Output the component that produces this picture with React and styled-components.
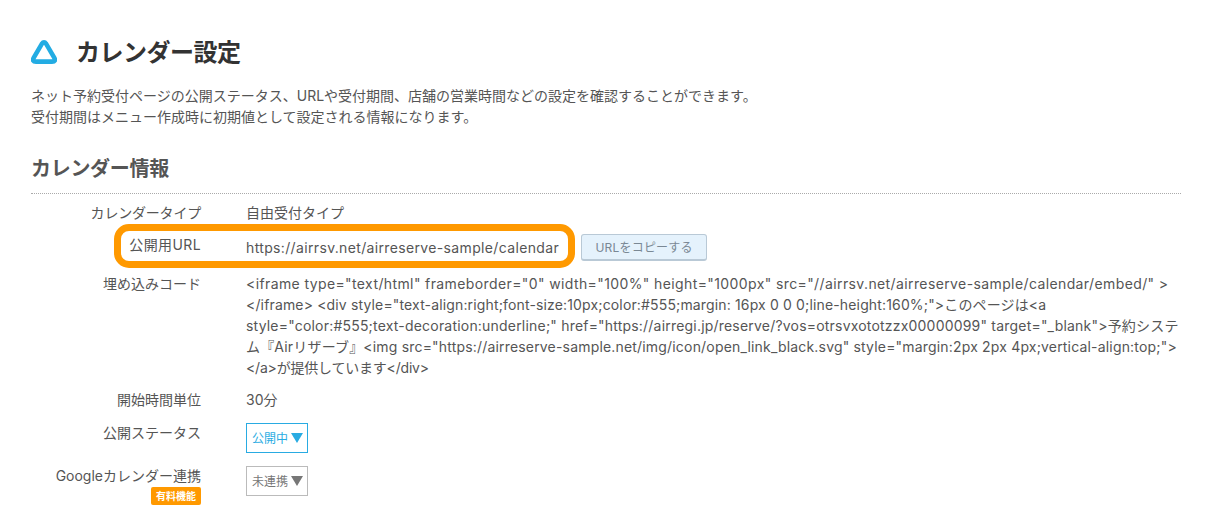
import React from "react";
import styled, { createGlobalStyle } from "styled-components";

const GlobalStyle = createGlobalStyle`
  body {
    margin: 0;
    background: #fff;
    color: #555;
    font-family: Inter, "Noto Sans CJK JP", sans-serif;
    font-size: 14px;
  }
`;

const Page = styled.main`
  box-sizing: border-box;
  width: 1208px;
  height: 520px;
  overflow: hidden;
  padding: 36px 27px 0 31px;
`;

const TitleRow = styled.header`
  display: flex;
  align-items: center;
  gap: 19px;
  height: 32px;
`;

const Title = styled.h1`
  margin: 0 0 4px;
  font-size: 24px;
  font-weight: 700;
  letter-spacing: -0.5px;
  color: #333;
`;

const Intro = styled.p`
  margin: 17px 0 0;
  line-height: 21px;
  color: #555;
`;

const SectionTitle = styled.h2`
  margin: 28px 0 0;
  padding-bottom: 9px;
  font-size: 20px;
  line-height: 29px;
  font-weight: 700;
  letter-spacing: -0.3px;
  color: #555;
  border-bottom: 1px dotted #aaa;
`;

const Rows = styled.dl`
  margin: 8px 0 0;
`;

const Row = styled.div`
  position: relative;
  display: grid;
  grid-template-columns: 170px 1fr;
  column-gap: 45px;
  margin-bottom: ${(p) => p.$gap}px;
`;

const Label = styled.dt`
  text-align: right;
  line-height: 21px;
  letter-spacing: ${(p) => p.$spacing || 0}px;
  color: #555;
`;

const Value = styled.dd`
  margin: 0;
  line-height: 21px;
  color: #555;
  display: ${(p) => (p.$inline ? "flex" : "block")};
  align-items: center;
`;

const UrlText = styled.span`
  letter-spacing: 0.35px;
`;

const CodeLine = styled.span`
  display: block;
  white-space: nowrap;
  letter-spacing: ${(p) => p.$spacing}px;
`;

const Highlight = styled.div`
  position: absolute;
  left: 83px;
  top: -10px;
  box-sizing: border-box;
  width: 461px;
  height: 44px;
  border: 7px solid #ff9900;
  border-radius: 15px;
`;

const CopyButton = styled.button`
  flex: none;
  margin-left: 22px;
  width: 126px;
  height: 27px;
  padding: 0;
  font: inherit;
  font-size: 12px;
  letter-spacing: 0.2px;
  color: #7a8894;
  background: #e5f2fc;
  border: 1px solid #b9c9d6;
  border-bottom-width: 2px;
  border-radius: 3px;
`;

const Status = styled.div`
  display: inline-flex;
  align-items: center;
  justify-content: space-between;
  box-sizing: border-box;
  width: 62px;
  height: 30px;
  margin-top: 1px;
  padding: 0 4px 0 5px;
  font-size: 12px;
  color: ${(p) => (p.$active ? "#29abe2" : "#777")};
  border: 1px solid ${(p) => (p.$active ? "#29abe2" : "#bbb")};
`;

const Caret = styled.span`
  width: 0;
  height: 0;
  border-left: 6.5px solid transparent;
  border-right: 6.5px solid transparent;
  border-top: 10px solid currentColor;
`;

const Badge = styled.span`
  display: block;
  width: 50px;
  margin: 1px 0 0 auto;
  font-size: 10px;
  line-height: 18px;
  font-weight: 700;
  text-align: center;
  color: #fff;
  background: #ff9900;
  border-radius: 2px;
`;

const Logo = () => (
  <svg width="26" height="24" viewBox="0 0 26 24" fill="none">
    <path
      d="M10.8 3.9 Q13 0.9 15.2 3.9 L23.2 17.6 Q25.4 21.6 21 21.6 L5 21.6 Q0.6 21.6 2.8 17.6 Z"
      stroke="#23ace3"
      strokeWidth="4.6"
    />
  </svg>
);

const embedLines = [
  { spacing: 0.39, text: `<iframe type="text/html" frameborder="0" width="100%" height="1000px" src="//airrsv.net/airreserve-sample/calendar/embed/" >` },
  { spacing: 0.15, text: `</iframe> <div style="text-align:right;font-size:10px;color:#555;margin: 16px 0 0 0;line-height:160%;">このページは<a` },
  { spacing: 0.2, text: `style="color:#555;text-decoration:underline;" href="https://airregi.jp/reserve/?vos=otrsvxototzzx00000099" target="_blank">予約システ` },
  { spacing: 0.18, text: `ム『Airリザーブ』<img src="https://airreserve-sample.net/img/icon/open_link_black.svg" style="margin:2px 2px 4px;vertical-align:top;">` },
  { spacing: -0.2, text: `</a>が提供しています</div>` },
];

const App = () => {
  return (
    <Page>
      <GlobalStyle />
      <TitleRow>
        <Logo />
        <Title>カレンダー設定</Title>
      </TitleRow>
      <Intro>
        ネット予約受付ページの公開ステータス、URLや受付期間、店舗の営業時間などの設定を確認することができます。
        <br />
        受付期間はメニュー作成時に初期値として設定される情報になります。
      </Intro>
      <SectionTitle>カレンダー情報</SectionTitle>
      <Rows>
        <Row $gap={11}>
          <Label $spacing={-0.2}>カレンダータイプ</Label>
          <Value>自由受付タイプ</Value>
        </Row>
        <Row $gap={12}>
          <Highlight />
          <Label $spacing={0.4}>公開用URL</Label>
          <Value $inline>
            <UrlText>https://airrsv.net/airreserve-sample/calendar</UrlText>
            <CopyButton>URLをコピーする</CopyButton>
          </Value>
        </Row>
        <Row $gap={11}>
          <Label>埋め込みコード</Label>
          <Value>
            {embedLines.map((line) => (
              <CodeLine key={line.text} $spacing={line.spacing}>
                {line.text}
              </CodeLine>
            ))}
          </Value>
        </Row>
        <Row $gap={12}>
          <Label>開始時間単位</Label>
          <Value>30分</Value>
        </Row>
        <Row $gap={12}>
          <Label>公開ステータス</Label>
          <Value>
            <Status $active>
              公開中
              <Caret />
            </Status>
          </Value>
        </Row>
        <Row $gap={0}>
          <Label>
            Googleカレンダー連携
            <Badge>有料機能</Badge>
          </Label>
          <Value>
            <Status>
              未連携
              <Caret />
            </Status>
          </Value>
        </Row>
      </Rows>
    </Page>
  );
};

export default App;
